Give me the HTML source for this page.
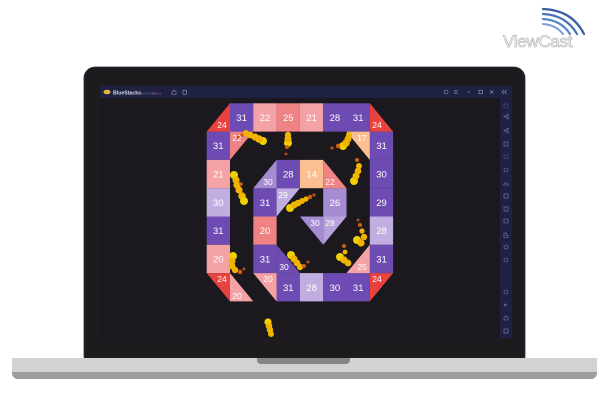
<!DOCTYPE html>
<html><head><meta charset="utf-8"><style>
html,body{margin:0;padding:0;background:#fff;width:602px;height:414px;overflow:hidden}
svg{display:block}
text{font-family:"Liberation Sans",sans-serif}
</style></head><body>
<svg width="602" height="414" viewBox="0 0 602 414" xmlns="http://www.w3.org/2000/svg">
<!-- ViewCast logo -->
<g fill="none" stroke-linecap="round">
<path d="M543 9 Q572 10 584 34" stroke="#3a5ea8" stroke-width="2.2"/>
<path d="M543 14 Q566 15 577 34" stroke="#4a72b8" stroke-width="2.2"/>
<path d="M543 19 Q561 20 570 34" stroke="#5b86c8" stroke-width="2.2"/>
<path d="M543 24 Q556 25 563 34" stroke="#7a9fd4" stroke-width="2"/>
</g>
<text x="503" y="47" font-size="17" fill="#fff" stroke="#bdbdbd" stroke-width="0.8" letter-spacing="-0.3">ViewCast</text>

<!-- laptop body -->
<rect x="84" y="67" width="441" height="300" rx="11" fill="#1d1b1e" stroke="#2a3140" stroke-width="0.8"/>
<!-- screen -->
<rect x="100" y="86" width="412" height="252" fill="#1b181e"/>
<rect x="100" y="86" width="412" height="12" fill="#1f2142"/>
<rect x="500" y="98" width="12" height="240" fill="#1f2142"/>
<!-- title -->
<ellipse cx="107" cy="92" rx="3.5" ry="2.3" fill="#e4b93a"/>
<text x="113" y="94.5" font-size="5.2" font-weight="bold" fill="#d8dae8">BlueStacks</text>
<text x="141" y="94.5" font-size="3" fill="#8c8fa8">5.0.0.7228</text>
<text x="155" y="94.5" font-size="3" fill="#c05060">Beta</text>
<g fill="none" stroke="#9a9cb8" stroke-width="0.6">
<path d="M172 94.5v-2.5l2-1.8 2 1.8v2.5z"/><rect x="183" y="90.3" width="3.5" height="3.8"/>
<circle cx="446" cy="92" r="2"/><path d="M454 90.5h3.5M454 92h3.5M454 93.5h3.5M467 92h3"/>
<rect x="479" y="90.3" width="3.5" height="3.5"/><path d="M490 90.3l3.3 3.3M493.3 90.3l-3.3 3.3M504 90l-1.8 2 1.8 2M506.5 90l-1.8 2 1.8 2"/>
</g>
<!-- sidebar icons -->
<g fill="none" stroke="#8085aa" stroke-width="0.6">
<rect x="504" y="104" width="4" height="4" stroke-dasharray="1.2 1.2"/>
<path d="M504 116h2l2-2v5l-2-2h-2z"/><path d="M504 130h2l2-2v5l-2-2h-2z"/>
<rect x="504" y="142" width="4" height="4"/><rect x="504" y="155" width="4" height="3.5" stroke="#4c5070"/>
<circle cx="506" cy="170" r="2"/><path d="M503.5 185h5l-1-2h-3z"/>
<rect x="504" y="194" width="4" height="4"/><rect x="504" y="207" width="4" height="4"/>
<path d="M504 219h4v4h-4z"/><path d="M504 233h2.5v2.5h1.5v2h-4z"/>
<circle cx="506" cy="247" r="2"/><circle cx="506" cy="260" r="2"/><circle cx="506" cy="292" r="2"/>
<path d="M508 305h-4l1.5-1.5M504 305l1.5 1.5"/><path d="M504 320v-2.5l2-1.8 2 1.8v2.5z"/><rect x="504" y="329" width="4" height="4"/>
</g>

<!-- game board -->
<g font-size="9.5" fill="#fff" text-anchor="middle">
<!-- squares: col width 23.3, row height 28.3, origin 206.7,103.3 -->
<g id="sq">
<rect x="230" y="103.3" width="23.3" height="28.3" fill="#6d4bb2"/><text x="241.6" y="121" fill="#fff">31</text>
<rect x="253.3" y="103.3" width="23.3" height="28.3" fill="#f4a2a5"/><text x="265" y="121" fill="#fff">22</text>
<rect x="276.6" y="103.3" width="23.3" height="28.3" fill="#ee8284"/><text x="288.3" y="121" fill="#fff">25</text>
<rect x="299.9" y="103.3" width="23.3" height="28.3" fill="#f4a2a5"/><text x="311.6" y="121" fill="#fff">21</text>
<rect x="323.2" y="103.3" width="23.3" height="28.3" fill="#6d4bb2"/><text x="334.9" y="121" fill="#fff">28</text>
<rect x="346.5" y="103.3" width="23.3" height="28.3" fill="#6d4bb2"/><text x="358.2" y="121" fill="#fff">31</text>

<rect x="206.7" y="131.6" width="23.3" height="28.3" fill="#6d4bb2"/><text x="218.3" y="149" fill="#fff">31</text>
<rect x="369.8" y="131.6" width="23.3" height="28.3" fill="#6d4bb2"/><text x="381.5" y="149" fill="#fff">31</text>

<rect x="206.7" y="159.9" width="23.3" height="28.3" fill="#f4a2a5"/><text x="218.3" y="177.5" fill="#fff">21</text>
<rect x="276.6" y="159.9" width="23.3" height="28.3" fill="#6d4bb2"/><text x="288.3" y="177.5" fill="#fff">28</text>
<rect x="299.9" y="159.9" width="23.3" height="28.3" fill="#fbbf92"/><text x="311.6" y="177.5" fill="#fff">14</text>
<rect x="369.8" y="159.9" width="23.3" height="28.3" fill="#6d4bb2"/><text x="381.5" y="177.5" fill="#fff">30</text>

<rect x="206.7" y="188.2" width="23.3" height="28.3" fill="#c1aee0"/><text x="218.3" y="206" fill="#fff">30</text>
<rect x="253.3" y="188.2" width="23.3" height="28.3" fill="#6d4bb2"/><text x="265" y="206" fill="#fff">31</text>
<rect x="323.2" y="188.2" width="23.3" height="28.3" fill="#a48bd2"/><text x="334.9" y="206" fill="#fff">26</text>
<rect x="369.8" y="188.2" width="23.3" height="28.3" fill="#6d4bb2"/><text x="381.5" y="206" fill="#fff">29</text>

<rect x="206.7" y="216.5" width="23.3" height="28.3" fill="#6d4bb2"/><text x="218.3" y="234" fill="#fff">31</text>
<rect x="253.3" y="216.5" width="23.3" height="28.3" fill="#ee8284"/><text x="265" y="234" fill="#fff">20</text>
<rect x="369.8" y="216.5" width="23.3" height="28.3" fill="#c1aee0"/><text x="381.5" y="234" fill="#fff">28</text>

<rect x="206.7" y="244.8" width="23.3" height="28.3" fill="#f4a2a5"/><text x="218.3" y="262.5" fill="#fff">20</text>
<rect x="253.3" y="244.8" width="23.3" height="28.3" fill="#6d4bb2"/><text x="265" y="262.5" fill="#fff">31</text>
<rect x="369.8" y="244.8" width="23.3" height="28.3" fill="#6d4bb2"/><text x="381.5" y="262.5" fill="#fff">31</text>

<rect x="276.6" y="273.1" width="23.3" height="28.3" fill="#6d4bb2"/><text x="288.3" y="291" fill="#fff">31</text>
<rect x="299.9" y="273.1" width="23.3" height="28.3" fill="#c1aee0"/><text x="311.6" y="291" fill="#fff">28</text>
<rect x="323.2" y="273.1" width="23.3" height="28.3" fill="#6d4bb2"/><text x="334.9" y="291" fill="#fff">30</text>
<rect x="346.5" y="273.1" width="23.3" height="28.3" fill="#6d4bb2"/><text x="358.2" y="291" fill="#fff">31</text>
</g>
<!-- triangles -->
<polygon points="230,103.3 230,131.6 206.7,131.6" fill="#e8423f"/><text x="222" y="128" fill="#fff" font-size="8.5">24</text>
<polygon points="369.8,103.3 393.1,131.6 369.8,131.6" fill="#e8423f"/><text x="377" y="128" fill="#fff" font-size="8.5">24</text>
<polygon points="230,131.6 253.3,131.6 230,159.9" fill="#ee8284"/><text x="237" y="141" fill="#fff" font-size="8.5">22</text>
<polygon points="346.5,131.6 369.8,131.6 369.8,159.9" fill="#fbbf92"/><text x="362" y="141" fill="#fff" font-size="8.5">17</text>
<polygon points="276.6,159.9 276.6,188.2 253.3,188.2" fill="#a48bd2"/><text x="268" y="185" fill="#fff" font-size="8.5">30</text>
<polygon points="323.2,159.9 346.5,188.2 323.2,188.2" fill="#ee8284"/><text x="330" y="185" fill="#fff" font-size="8.5">22</text>
<polygon points="276.6,188.2 299.9,188.2 276.6,216.5" fill="#c1aee0"/><text x="283" y="198" fill="#fff" font-size="8.5">29</text>
<polygon points="299.9,216.5 323.2,216.5 323.2,244.8" fill="#a48bd2"/><text x="315" y="226" fill="#fff" font-size="8.5">30</text>
<polygon points="323.2,216.5 346.5,216.5 323.2,244.8" fill="#b7a2dc"/><text x="330" y="226" fill="#fff" font-size="8.5">28</text>
<polygon points="276.6,244.8 299.9,273.1 276.6,273.1" fill="#6d4bb2"/><text x="284" y="270" fill="#fff" font-size="8.5">30</text>
<polygon points="369.8,244.8 369.8,273.1 346.5,273.1" fill="#f4a2a5"/><text x="362" y="270" fill="#fff" font-size="8.5">25</text>
<polygon points="206.7,273.1 230,273.1 230,301.4" fill="#e8423f"/><text x="222" y="282" fill="#fff" font-size="8.5">24</text>
<polygon points="230,273.1 253.3,301.4 230,301.4" fill="#f4a2a5"/><text x="237" y="299" fill="#fff" font-size="8.5">20</text>
<polygon points="253.3,273.1 276.6,273.1 276.6,301.4" fill="#f4a2a5"/><text x="268" y="282" fill="#fff" font-size="8.5">20</text>
<polygon points="369.8,273.1 393.1,273.1 369.8,301.4" fill="#e8423f"/><text x="377" y="282" fill="#fff" font-size="8.5">24</text>
</g>

<!-- balls -->
<g fill="#f0b400">
<g><circle cx="263" cy="141" r="4" fill="#f0d000"/><circle cx="259" cy="139" r="3.8"/><circle cx="255" cy="137" r="3.6"/><circle cx="250" cy="135" r="3.4"/><circle cx="246" cy="133" r="3"/><circle cx="242" cy="135" r="1.8" fill="#d06010"/><circle cx="238" cy="137" r="1.4" fill="#c05010"/></g>
<g><circle cx="288" cy="143" r="4" fill="#f0d000"/><circle cx="288" cy="139" r="3.6"/><circle cx="288" cy="135" r="3.2"/><circle cx="287" cy="147" r="2" fill="#d06010"/><circle cx="286" cy="154" r="1.4" fill="#c05010"/></g>
<g><circle cx="343" cy="146" r="4" fill="#f0d000"/><circle cx="346" cy="143" r="3.8"/><circle cx="348" cy="139" r="3.5"/><circle cx="349" cy="135" r="3"/><circle cx="338" cy="146" r="2.2" fill="#d06010"/><circle cx="332" cy="148" r="1.6" fill="#c05010"/></g>
<g><circle cx="354" cy="181" r="4" fill="#f0d000"/><circle cx="356" cy="176" r="3.5"/><circle cx="358" cy="171" r="3.3"/><circle cx="359" cy="166" r="3"/><circle cx="357" cy="160" r="2" fill="#d06010"/></g>
<g><circle cx="234" cy="175" r="4" fill="#f0d000"/><circle cx="236" cy="180" r="3.6"/><circle cx="237" cy="185" r="3.6"/><circle cx="239" cy="190" r="3.6"/><circle cx="242" cy="196" r="3.8"/><circle cx="244" cy="201" r="4" fill="#f0d000"/><circle cx="241" cy="184" r="1.8" fill="#d06010"/></g>
<g><circle cx="290" cy="208" r="4" fill="#f0d000"/><circle cx="294" cy="205" r="3.5"/><circle cx="298" cy="203" r="3.3"/><circle cx="302" cy="201" r="3"/><circle cx="306" cy="199" r="2.6"/><circle cx="310" cy="197" r="2.2" fill="#d06010"/><circle cx="314" cy="195" r="1.6" fill="#c05010"/></g>
<g><circle cx="357" cy="240" r="4" fill="#f0d000"/><circle cx="361" cy="243" r="3.6"/><circle cx="364" cy="237" r="3.2"/><circle cx="362" cy="231" r="2.6"/><circle cx="360" cy="225" r="2" fill="#d06010"/><circle cx="358" cy="220" r="1.4" fill="#c05010"/></g>
<g><circle cx="233" cy="256" r="4" fill="#f0d000"/><circle cx="232" cy="261" r="3.5"/><circle cx="232" cy="266" r="3.5"/><circle cx="235" cy="270" r="3.2"/><circle cx="240" cy="272" r="2.2" fill="#d06010"/><circle cx="244" cy="269" r="1.5" fill="#c05010"/></g>
<g><circle cx="291" cy="255" r="4" fill="#f0d000"/><circle cx="294" cy="259" r="3.6"/><circle cx="297" cy="263" r="3.4"/><circle cx="300" cy="267" r="3.2"/><circle cx="304" cy="266" r="2" fill="#d06010"/><circle cx="308" cy="262" r="1.5" fill="#c05010"/></g>
<g><circle cx="340" cy="257" r="4" fill="#f0d000"/><circle cx="344" cy="260" r="3.6"/><circle cx="348" cy="263" r="3.4"/><circle cx="345" cy="252" r="2.4"/><circle cx="344" cy="246" r="2" fill="#d06010"/></g>
<g><circle cx="268" cy="322" r="3.6" fill="#f0d000"/><circle cx="269" cy="326" r="3.3"/><circle cx="270" cy="330" r="3.2"/><circle cx="271" cy="334" r="3"/></g>
</g>

<!-- base -->
<path d="M12 358H597V373a6 6 0 0 1-6 6H18a6 6 0 0 1-6-6z" fill="#d2d2d2"/>
<path d="M12 372H597V373a6 6 0 0 1-6 6H18a6 6 0 0 1-6-6z" fill="#9d9d9d"/>
<path d="M257 358H350V360a4 4 0 0 1-4 4H261a4 4 0 0 1-4-4z" fill="#858585"/>
</svg>
</body></html>
